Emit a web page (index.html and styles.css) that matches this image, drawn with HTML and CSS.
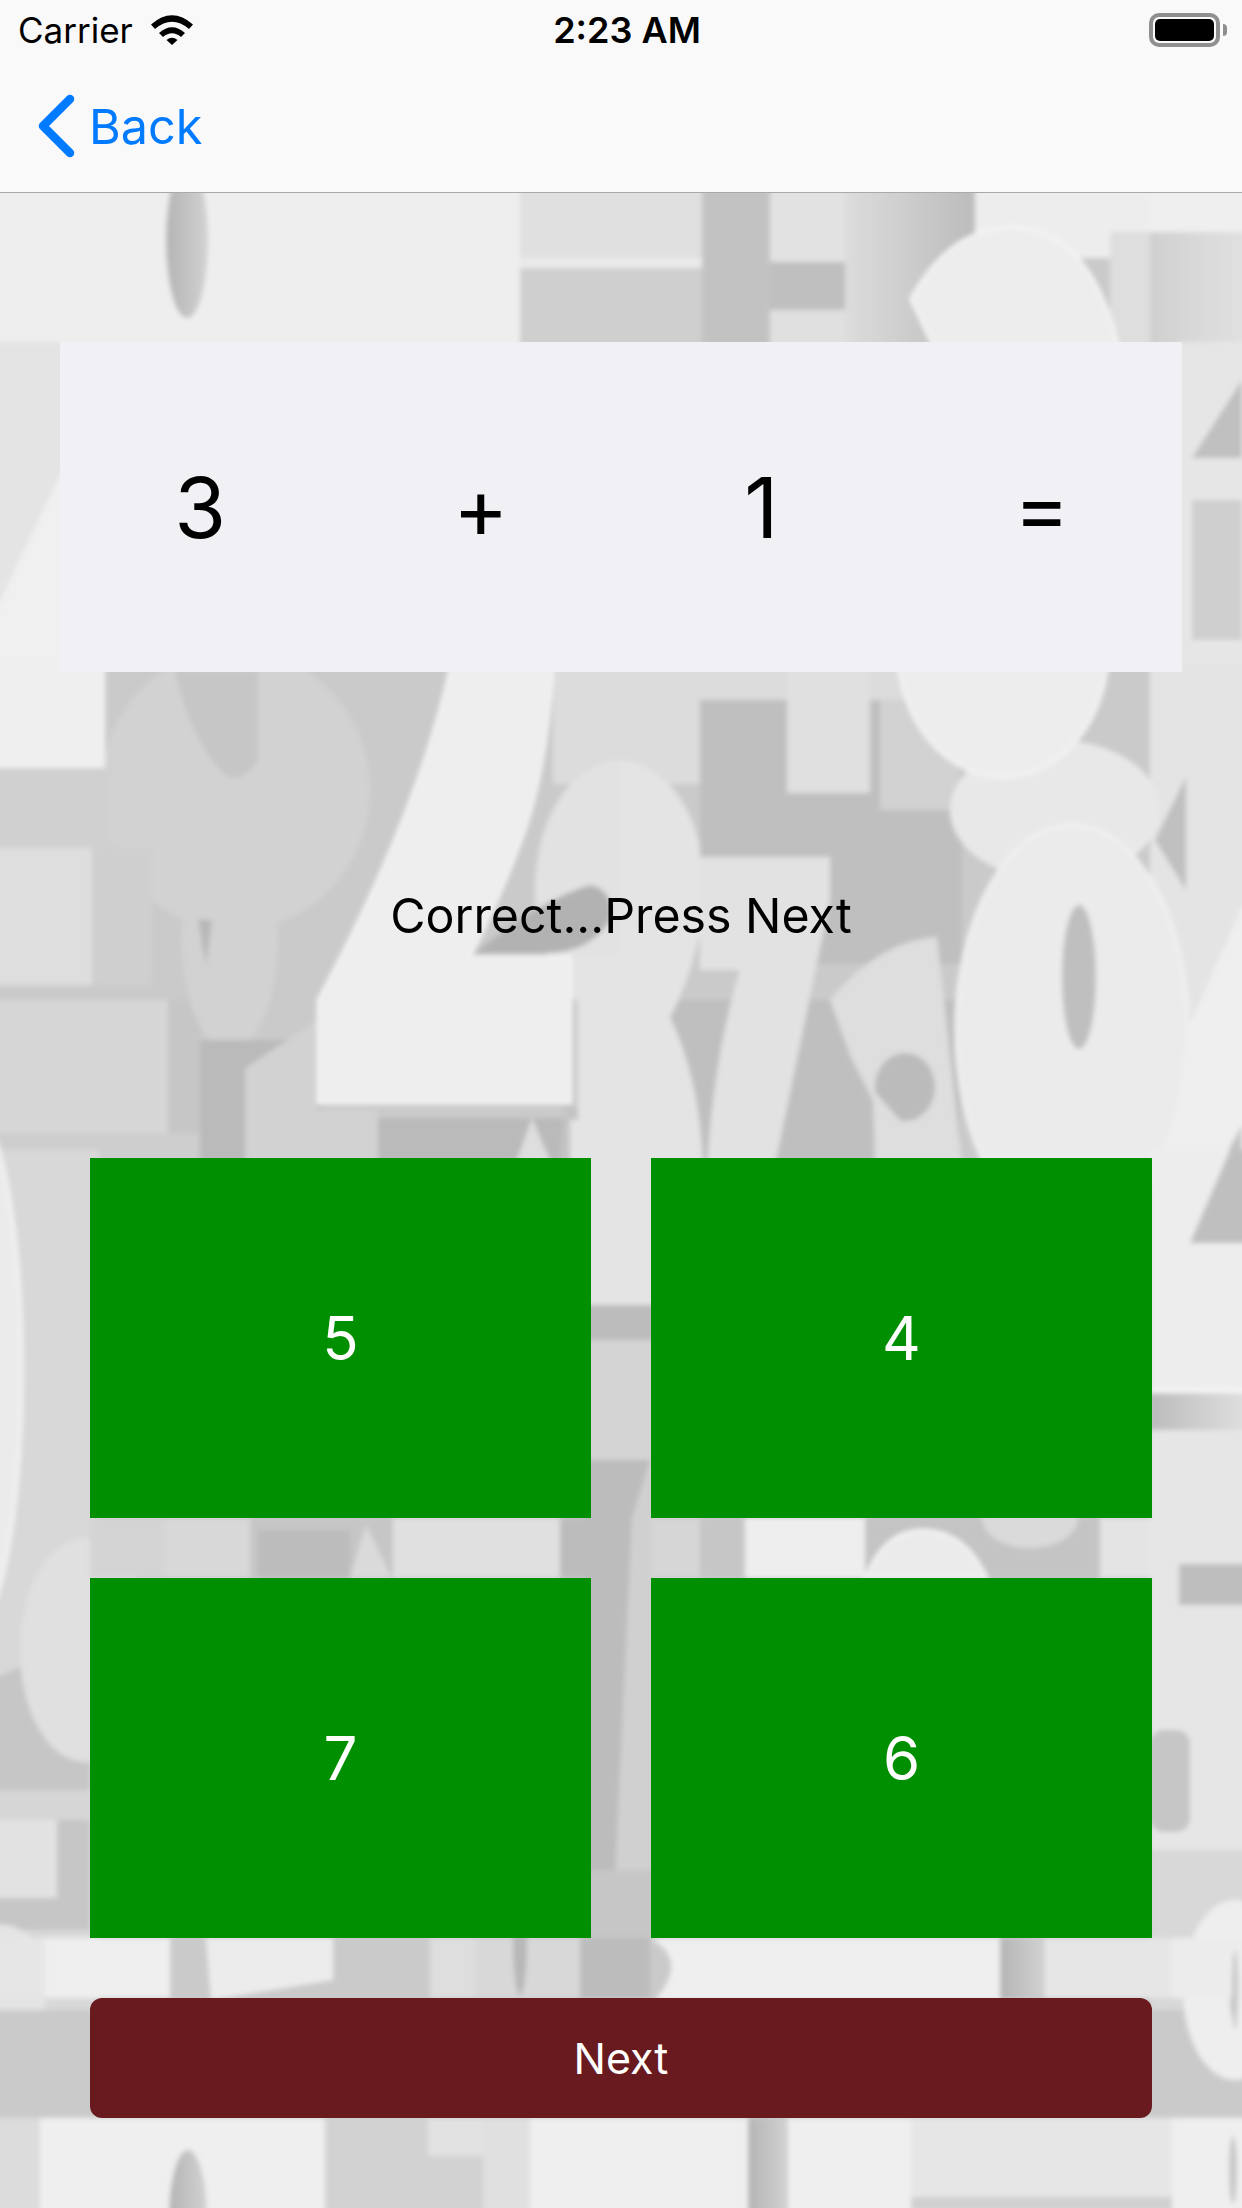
FILE: index.html
```html
<!DOCTYPE html>
<html>
<head>
  <link rel="stylesheet" href="styles.css">
</head>
<body>
  <header class="topbar">
    <div class="status">
      <div class="status-left">
        <span>Carrier</span>
        <svg class="wifi" width="42" height="30" viewBox="0 0 42 30">
          <path d="M0 9.5 Q21 -9 42 9.5 L38 14 Q21 -0.5 4 14 Z"/>
          <path d="M8 18 Q21 6.5 34 18 L30 22 Q21 14.5 12 22 Z"/>
          <path d="M15.5 25 Q21 20.5 26.500 25 L21 30 Z"/>
        </svg>
      </div>
      <div class="status-time">2:23 AM</div>
      <div class="status-right">
        <div class="battery"><div class="battery-fill"></div></div>
        <div class="battery-nub"></div>
      </div>
    </div>
    <nav class="navbar">
      <svg class="chevron" width="38" height="64" viewBox="0 0 38 64">
        <path d="M33 5 L6 32 L33 59" fill="none" stroke="#007aff" stroke-width="8.500" stroke-linecap="round" stroke-linejoin="round"/>
      </svg>
      <span class="back-label">Back</span>
    </nav>
  </header>

  <main class="game">
    <!-- backdrop: soft grey shapes, stands in for the photo of 3d numbers. page coordinates -->
    <svg class="backdrop" viewBox="0 193 1242 2015">
      <defs>
        <filter id="soft"><feGaussianBlur stdDeviation="2.500"/></filter>
        <linearGradient id="slit" x1="0" x2="1" y1="0" y2="0">
          <stop offset="0" stop-color="#b4b4b4"/>
          <stop offset="1" stop-color="#d2d2d2"/>
        </linearGradient>
        <linearGradient id="fade" x1="0" x2="1" y1="0" y2="0">
          <stop offset="0" stop-color="#bcbcbc"/>
          <stop offset="1" stop-color="#e0e0e0"/>
        </linearGradient>
        <linearGradient id="fadeback" x1="0" x2="1" y1="0" y2="0">
          <stop offset="0" stop-color="#dcdcdc"/>
          <stop offset="1" stop-color="#bcbcbc"/>
        </linearGradient>
        <linearGradient id="sideshade" x1="0" x2="1" y1="0" y2="0">
          <stop offset="0" stop-color="#d0d0d0"/>
          <stop offset="1" stop-color="#e2e2e2"/>
        </linearGradient>
      </defs>

      <g filter="url(#soft)">
        <rect x="-10" y="180" width="1262" height="2040" fill="#cacaca"/>

        <!-- top band -->
        <rect x="-10" y="180" width="530" height="170" fill="#eeeeee"/>
        <ellipse cx="187" cy="240" rx="21" ry="78" fill="url(#slit)"/>
        <rect x="520" y="180" width="182" height="78" fill="#e0e0e0"/>
        <rect x="520" y="258" width="182" height="10" fill="#eaeaea"/>
        <rect x="520" y="268" width="182" height="80" fill="#cfcfcf"/>
        <rect x="702" y="180" width="68" height="170" fill="#c2c2c2"/>
        <rect x="770" y="180" width="75" height="82" fill="#e2e2e2"/>
        <rect x="770" y="262" width="75" height="48" fill="#bfbfbf"/>
        <rect x="770" y="310" width="75" height="40" fill="#e0e0e0"/>
        <rect x="845" y="180" width="130" height="170" fill="url(#fadeback)"/>
        <rect x="975" y="180" width="175" height="78" fill="#ededed"/>
        <rect x="1150" y="180" width="100" height="52" fill="#efefef"/>
        <rect x="1150" y="232" width="100" height="120" fill="url(#sideshade)"/>
        <rect x="1110" y="232" width="40" height="120" fill="#dedede"/>
        <path d="M911 299 Q950 227 1014 227 Q1090 232 1117 342 V350 H935 Z" fill="#ededed" stroke="#f6f6f6" stroke-width="3"/>

        <!-- both sides of the panel -->
        <rect x="-10" y="342" width="75" height="340" fill="#e4e4e4"/>
        <path d="M-10 622 L65 465 V680 H-10 Z" fill="#f0f0f0"/>
        <rect x="1178" y="342" width="70" height="340" fill="#e6e6e6"/>
        <path d="M1242 380 L1192 458 H1242 Z" fill="#c0c0c0"/>
        <rect x="1192" y="500" width="50" height="140" fill="#cfcfcf"/>

        <!-- middle left: soft mass behind the diagonal -->
        <ellipse cx="235" cy="790" rx="135" ry="140" fill="#d2d2d2"/>
        <path d="M175 670 H258 V760 Q240 785 225 775 Q190 740 175 670 Z" fill="#c6c6c6"/>
        <rect x="-10" y="664" width="115" height="104" fill="#efefef"/>
        <rect x="-10" y="768" width="120" height="200" fill="#d0d0d0"/>
        <rect x="-10" y="848" width="102" height="137" fill="#dedede"/>
        <rect x="92" y="848" width="60" height="137" fill="#cfcfcf"/>
        <rect x="-10" y="1000" width="178" height="133" fill="#d6d6d6"/>
        <rect x="168" y="1000" width="32" height="158" fill="#c6c6c6"/>
        <rect x="-10" y="1133" width="210" height="30" fill="#cecece"/>
        <ellipse cx="230" cy="940" rx="48" ry="110" fill="#d2d2d2"/>
        <path d="M198 920 L212 920 L206 965 Z" fill="#b8b8b8"/>
        <path d="M200 1040 H320 V1165 H200 Z" fill="#bababa"/>
        <path d="M245 1068 L318 1020 V1165 H245 Z" fill="#d2d2d2"/>
        <rect x="318" y="1110" width="60" height="55" fill="#d2d2d2"/>
        <rect x="378" y="1118" width="200" height="45" fill="#bababa"/>
        <path d="M515 1165 L532 1118 L552 1165 Z" fill="#dedede"/>
        <path d="M565 1100 Q610 1130 600 1165 H560 Z" fill="#c4c4c4"/>

        <!-- right of the diagonal -->
        <rect x="553" y="664" width="150" height="120" fill="#dcdcdc"/>
        <ellipse cx="620" cy="890" rx="85" ry="130" fill="#e2e2e2"/>
        <path d="M475 953 Q540 900 590 885 Q615 890 610 920 Q590 953 545 953 Z" fill="#b2b2b2"/>

        <!-- grey gap with the plus bar -->
        <rect x="700" y="664" width="262" height="300" fill="#bfbfbf"/>
        <rect x="700" y="664" width="262" height="36" fill="#dcdcdc"/>
        <rect x="787" y="664" width="83" height="129" fill="#e0e0e0"/>
        <rect x="620" y="1000" width="340" height="165" fill="#bfbfbf"/>
        <rect x="880" y="700" width="80" height="110" fill="#d2d2d2"/>

        <!-- lobe and stroke of the next figure along -->
        <path d="M620 760 Q690 780 700 860 V930 Q690 980 670 1017 Q700 1080 703 1165 H570 V1120 H578 V957 H620 Z" fill="#e4e4e4"/>
        <path d="M700 857 H830 V900 L775 1165 H707 Q715 1050 740 970 H700 Z" fill="#e2e2e2"/>
        <path d="M830 1000 Q880 940 937 937 L962 1165 H875 L873 1100 L850 1055 Z" fill="#dedede"/>
        <ellipse cx="905" cy="1087" rx="30" ry="34" fill="#bbbbbb"/>
        <path d="M850 1055 L878 1110 L874 1165 H900 V1120 L873 1090 Z" fill="#dedede"/>

        <!-- big ovals on the right -->
        <rect x="1150" y="664" width="100" height="500" fill="#e4e4e4"/>
        <path d="M1242 907 L1128 1165 H1250 V907 Z" fill="#efefef"/>
        <path d="M1220 1165 L1242 1125 V1165 Z" fill="#c4c4c4"/>
        <ellipse cx="1055" cy="810" rx="105" ry="70" fill="#e8e8e8"/>
        <path d="M1155 840 L1186 777 V890 Z" fill="#c0c0c0"/>
        <ellipse cx="1003" cy="650" rx="105" ry="127" fill="#ededed" stroke="#f4f4f4" stroke-width="3"/>
        <ellipse cx="1072" cy="1030" rx="116" ry="205" fill="#ebebeb" stroke="#f2f2f2" stroke-width="3"/>
        <ellipse cx="1079" cy="977" rx="17" ry="72" fill="#bfbfbf"/>

        <!-- the diagonal stroke and its foot -->
        <path d="M451 664 H553 Q548 760 526 827 Q500 900 470 957 H571 V1103 H318 V1000 Q420 810 451 664 Z" fill="#eeeeee" stroke="#f6f6f6" stroke-width="2.500"/>

        <!-- left strip -->
        <rect x="-10" y="1150" width="110" height="860" fill="#d8d8d8"/>
        <ellipse cx="-30" cy="1370" rx="52" ry="265" fill="#ebebeb" stroke="#f4f4f4" stroke-width="3"/>
        <path d="M-10 1680 L25 1665 L90 1640 V1930 H-10 Z" fill="#c6c6c6"/>
        <ellipse cx="85" cy="1650" rx="65" ry="112" fill="#e0e0e0"/>
        <rect x="-10" y="1790" width="100" height="30" fill="#d6d6d6"/>
        <rect x="-10" y="1820" width="67" height="78" fill="#e2e2e2"/>
        <path d="M-10 1925 Q20 1920 45 1950 L45 2010 H-10 Z" fill="#e4e4e4"/>

        <!-- gap between the button columns -->
        <rect x="585" y="1150" width="72" height="155" fill="#e4e4e4"/>
        <rect x="585" y="1305" width="72" height="35" fill="#bcbcbc"/>
        <rect x="585" y="1340" width="72" height="120" fill="#d4d4d4"/>
        <path d="M585 1460 H650 L632 1518 L612 1940 H585 Z" fill="#bcbcbc"/>
        <path d="M650 1460 H657 V1940 H612 L632 1518 Z" fill="#d0d0d0"/>
        <rect x="585" y="1870" width="72" height="70" fill="#c6c6c6"/>

        <!-- row between the upper and lower buttons -->
        <rect x="90" y="1518" width="501" height="60" fill="#d4d4d4"/>
        <rect x="165" y="1518" width="85" height="60" fill="#d8d8d8"/>
        <rect x="250" y="1518" width="143" height="60" fill="#c6c6c6"/>
        <rect x="258" y="1530" width="92" height="48" fill="#bcbcbc"/>
        <path d="M350 1578 L366 1525 L392 1578 Z" fill="#dadada"/>
        <rect x="393" y="1518" width="167" height="60" fill="#e0e0e0"/>
        <rect x="560" y="1518" width="40" height="60" fill="#bcbcbc"/>
        <rect x="651" y="1518" width="501" height="60" fill="#d6d6d6"/>
        <rect x="700" y="1518" width="45" height="60" fill="#c6c6c6"/>
        <rect x="745" y="1518" width="120" height="60" fill="#eeeeee"/>
        <rect x="865" y="1518" width="235" height="60" fill="#c4c4c4"/>
        <ellipse cx="1030" cy="1518" rx="48" ry="30" fill="#dadada"/>
        <path d="M865 1578 Q885 1530 922 1530 Q965 1530 987 1578 Z" fill="#ebebeb" stroke="#f8f8f8" stroke-width="2.500"/>
        <rect x="1100" y="1518" width="52" height="60" fill="#e4e4e4"/>

        <!-- right strip -->
        <rect x="1150" y="1150" width="100" height="860" fill="#e6e6e6"/>
        <rect x="1150" y="1150" width="100" height="240" fill="#ededed"/>
        <path d="M1190 1243 L1230 1150 H1250 V1243 Z" fill="#bfbfbf"/>
        <rect x="1150" y="1388" width="100" height="5" fill="#f6f6f6"/>
        <rect x="1150" y="1393" width="100" height="37" fill="url(#fade)"/>
        <rect x="1179" y="1564" width="70" height="41" fill="#bebebe"/>
        <rect x="1150" y="1730" width="40" height="102" rx="14" fill="#c6c6c6"/>
        <rect x="1150" y="1850" width="100" height="160" fill="#d8d8d8"/>
        <ellipse cx="1235" cy="1990" rx="52" ry="90" fill="#eeeeee"/>
        <ellipse cx="1233" cy="1995" rx="3" ry="22" fill="#c4c4c4"/>

        <!-- strip above the next button -->
        <rect x="-10" y="1938" width="1262" height="60" fill="#cacaca"/>
        <rect x="-10" y="1938" width="55" height="60" fill="#e6e6e6"/>
        <rect x="45" y="1938" width="125" height="60" fill="#efefef"/>
        <path d="M206 1938 H333 V1980 L211 2000 Z" fill="#ececec"/>
        <rect x="430" y="1938" width="45" height="60" fill="#dedede"/>
        <rect x="475" y="1938" width="105" height="60" fill="#d8d8d8"/>
        <ellipse cx="520" cy="1945" rx="7" ry="50" fill="#b8b8b8"/>
        <rect x="580" y="1938" width="70" height="60" fill="#bcbcbc"/>
        <path d="M650 1938 H1000 V2000 H655 Q690 1960 650 1938 Z" fill="#efefef"/>
        <rect x="1000" y="1938" width="45" height="60" fill="url(#slit)"/>
        <rect x="1045" y="1938" width="127" height="60" fill="#e6e6e6"/>
        <rect x="1172" y="1938" width="80" height="60" fill="#ececec"/>
        <ellipse cx="1235" cy="1990" rx="3" ry="40" fill="#c8c8c8"/>

        <!-- strip below the next button -->
        <rect x="-10" y="2118" width="1262" height="100" fill="#efefef"/>
        <rect x="-10" y="2118" width="50" height="100" fill="#dcdcdc"/>
        <ellipse cx="188" cy="2218" rx="19" ry="68" fill="url(#slit)"/>
        <rect x="325" y="2118" width="205" height="100" fill="#d2d2d2"/>
        <rect x="428" y="2118" width="55" height="38" fill="#e2e2e2"/>
        <rect x="483" y="2118" width="47" height="100" fill="#e0e0e0"/>
        <rect x="748" y="2118" width="40" height="100" fill="url(#slit)"/>
        <rect x="911" y="2118" width="261" height="79" fill="#e6e6e6"/>
        <rect x="911" y="2197" width="261" height="15" fill="#d0d0d0"/>
        <ellipse cx="1233" cy="2170" rx="4" ry="34" fill="#c8c8c8"/>
      </g>
    </svg>

    <section class="equation">
      <div class="term">3</div>
      <div class="term">+</div>
      <div class="term">1</div>
      <div class="term">=</div>
    </section>

    <div class="message"><span>Correct...Press Next</span></div>

    <section class="answers">
      <div class="answer">5</div>
      <div class="answer">4</div>
      <div class="answer">7</div>
      <div class="answer">6</div>
    </section>

    <div class="next-btn">Next</div>
  </main>
</body>
</html>
```

FILE: styles.css
```css
* {
  box-sizing: border-box;
}

body {
  margin: 0;
  width: 1242px;
  height: 2208px;
  overflow: hidden;
  display: flex;
  flex-direction: column;
  font-family: Inter, "Liberation Sans", sans-serif;
  color: #000;
  background: #e4e4e4;
}

.topbar {
  height: 193px;
  background: #f9f9f9;
  border-bottom: 1px solid #a9a9a9;
}

.status {
  height: 60px;
  display: flex;
  align-items: center;
  padding: 0 15px 0 18px;
  font-size: 35px;
}

.status-left {
  flex: 1;
  display: flex;
  align-items: center;
  gap: 18px;
}

.status-time {
  font-weight: 600;
  font-size: 36px;
  padding-left: 9px;
}

.status-right {
  flex: 1;
  display: flex;
  justify-content: flex-end;
  align-items: center;
  gap: 3px;
}

.wifi {
  fill: #000;
}

.battery {
  width: 71px;
  height: 34px;
  border: 4px solid #8f8f8f;
  border-radius: 10px;
  padding: 2px;
}

.battery-fill {
  height: 100%;
  background: #000;
  border-radius: 5px;
}

.battery-nub {
  width: 4px;
  height: 12px;
  background: #8f8f8f;
  border-radius: 0 4px 4px 0;
}

.navbar {
  height: 132px;
  display: flex;
  align-items: center;
  padding-left: 37px;
  gap: 14px;
  color: #007aff;
  font-size: 48.500px;
}

.game {
  position: relative;
  flex: 1;
  display: flex;
  flex-direction: column;
  padding: 149px 90px 90px;
}

.backdrop {
  position: absolute;
  top: 0;
  left: 0;
  width: 1242px;
  height: 2015px;
}

.equation {
  position: relative;
  margin: 0 -30px;
  height: 330px;
  display: grid;
  grid-template-columns: repeat(4, 1fr);
  align-items: center;
  background: #f0f0f5;
  font-size: 84px;
}

.term {
  text-align: center;
}

.message {
  position: relative;
  height: 486px;
  display: flex;
  align-items: center;
  justify-content: center;
  font-size: 48.300px;
}

.answers {
  position: relative;
  display: grid;
  grid-template-columns: repeat(2, 501px);
  grid-auto-rows: 360px;
  gap: 60px;
}

.answer {
  display: flex;
  align-items: center;
  justify-content: center;
  background: #008f00;
  color: #fff;
  font-size: 60px;
}

.next-btn {
  position: relative;
  margin-top: 60px;
  height: 120px;
  display: flex;
  align-items: center;
  justify-content: center;
  background: #691a1e;
  border-radius: 12px;
  color: #fff;
  font-size: 43px;
}
```
